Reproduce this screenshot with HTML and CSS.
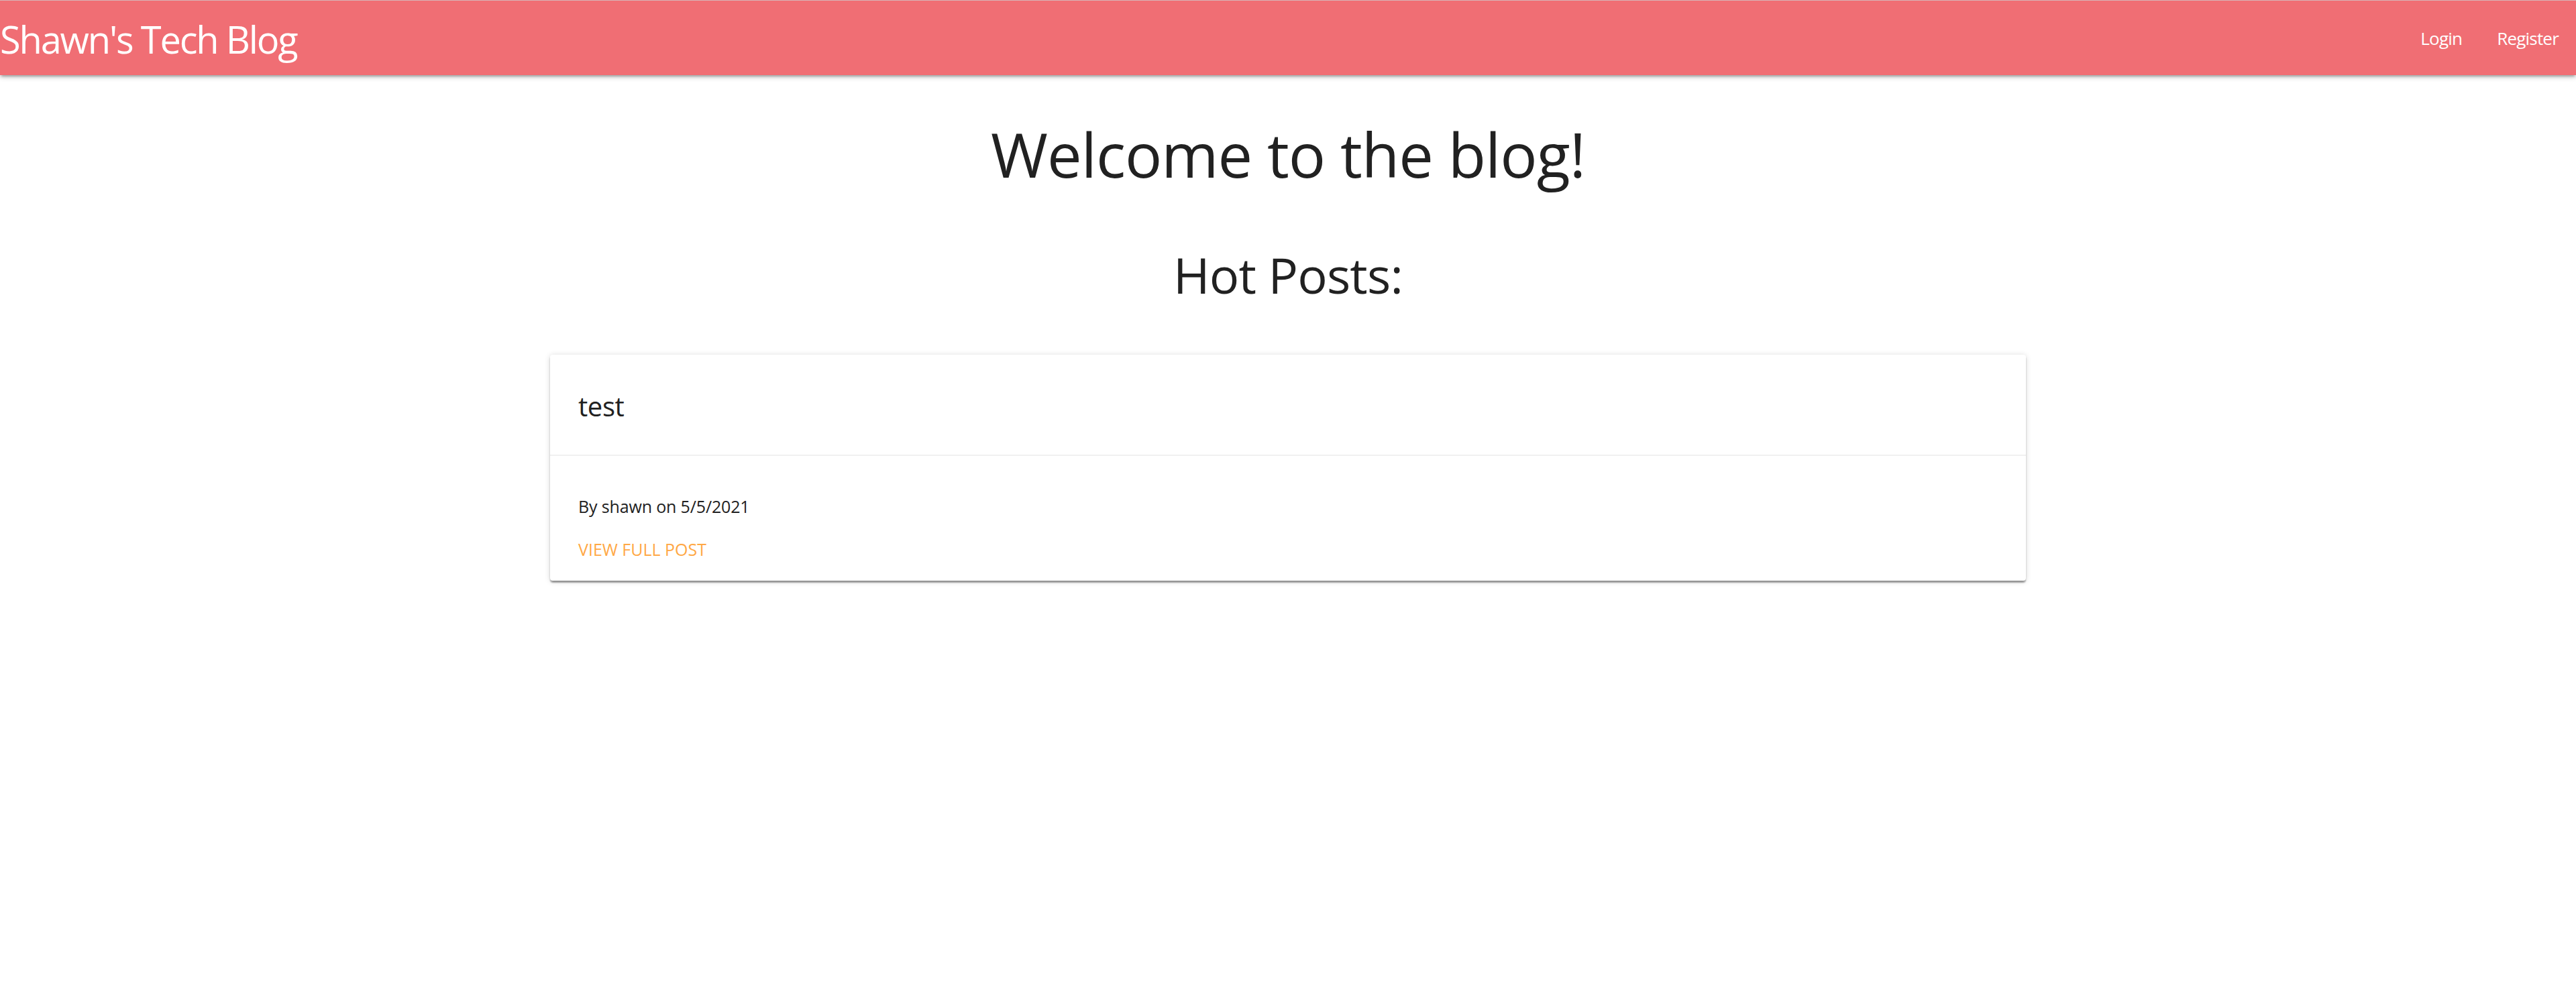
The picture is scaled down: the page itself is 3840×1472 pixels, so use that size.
FILE: index.html
```html
<!DOCTYPE html>
<html lang="en">
<head>
<meta charset="utf-8">
<title>Shawn's Tech Blog</title>
<link rel="stylesheet" href="styles.css">
</head>
<body>
<nav class="navbar">
  <a class="brand" href="#">Shawn's Tech Blog</a>
  <ul class="nav-links">
    <li><a href="#">Login</a></li>
    <li><a href="#">Register</a></li>
  </ul>
</nav>
<main class="main">
  <h2 class="welcome">Welcome to the blog!</h2>
  <h3 class="hot">Hot Posts:</h3>
  <article class="card">
    <div class="card-content">
      <span class="card-title">test</span>
    </div>
    <div class="card-action">
      <p class="meta">By shawn on 5/5/2021</p>
      <a class="more" href="#">View full post</a>
    </div>
  </article>
</main>
</body>
</html>
```

FILE: styles.css
```css
html, body {
  margin: 0;
  padding: 0;
}
body {
  background: #ffffff;
  font-family: "Open Sans", "Noto Sans", sans-serif;
  color: #212121;
}
a {
  text-decoration: none;
}
.navbar {
  height: 112px;
  background: #f06e74;
  display: flex;
  align-items: center;
  justify-content: space-between;
  box-shadow: 0 3px 4px 0 rgba(0,0,0,0.14), 0 5px 2px -3px rgba(0,0,0,0.12), 0 2px 9px 0 rgba(0,0,0,0.2);
  border-top: 1px solid #d8b4b6;
  box-sizing: border-box;
}
.brand {
  color: #ffffff;
  font-size: 56px;
  line-height: 112px;
  padding-top: 2px;
  letter-spacing: -2.2px;
}
.nav-links {
  list-style: none;
  margin: 0;
  padding: 0;
  display: flex;
}
.nav-links a {
  display: block;
  color: #ffffff;
  font-size: 26px;
  line-height: 110px;
  padding: 0 26px;
  letter-spacing: -0.8px;
}
.main {
  display: flex;
  flex-direction: column;
  align-items: center;
}
.welcome {
  margin: 63px 0 0;
  font-size: 92px;
  line-height: 110px;
  font-weight: 400;
  letter-spacing: -1px;
}
.hot {
  margin: 80px 0 0;
  font-size: 74px;
  line-height: 90px;
  font-weight: 400;
  letter-spacing: -0.8px;
}
.card {
  margin-top: 74px;
  margin-bottom: 40px;
  width: 2200px;
  background: #ffffff;
  border-radius: 4px;
  box-shadow: 0 3px 2px 0 rgba(0,0,0,0.28), 0 5px 3px -3px rgba(0,0,0,0.18), 0 1px 8px 0 rgba(0,0,0,0.16);
}
.card-content {
  padding: 49px 42px 44px;
}
.card-title {
  display: block;
  font-size: 40px;
  line-height: 56px;
  letter-spacing: -0.4px;
}
.card-action {
  border-top: 2px solid rgba(160,160,160,0.15);
  padding: 57px 42px 29px;
}
.meta {
  margin: 0;
  font-size: 25px;
  line-height: 36px;
  letter-spacing: -0.15px;
}
.more {
  display: block;
  margin-top: 28px;
  color: #ffa845;
  text-transform: uppercase;
  font-size: 25px;
  line-height: 36px;
  letter-spacing: 0;
}
```
